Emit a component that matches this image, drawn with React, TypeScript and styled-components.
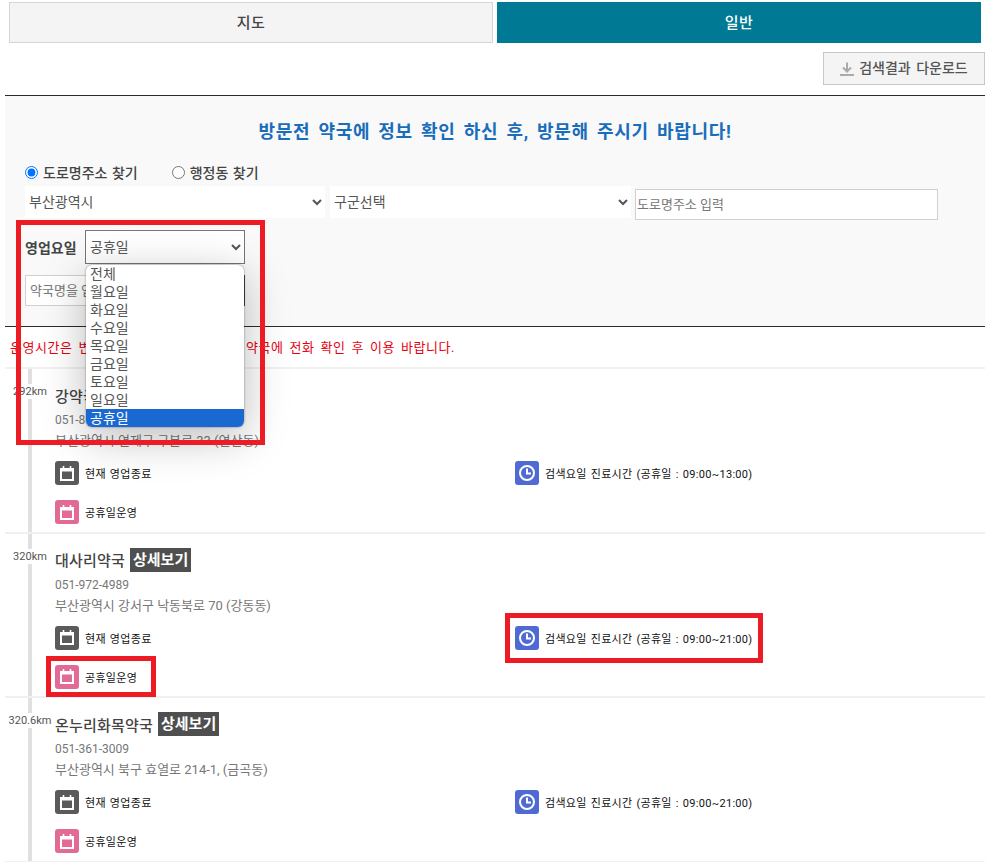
import React from "react";
import styled, { createGlobalStyle } from "styled-components";

const Global = createGlobalStyle`
  html, body { margin: 0; padding: 0; background: #fff; }
  body { font-family: Roboto, "Noto Sans CJK KR", "Noto Sans", sans-serif; color: #333; }
  * { box-sizing: border-box; }
`;

const Page = styled.div`
  position: relative;
  width: 994px;
  height: 862px;
  overflow: hidden;
  padding: 2px 9px 0 5px;
`;

const Tabs = styled.div`
  display: flex;
  gap: 4px;
  margin: 0 4px;
`;

const Tab = styled.div<{ $active?: boolean }>`
  width: 484px;
  height: 41px;
  display: flex;
  align-items: center;
  justify-content: center;
  padding-bottom: 2px;
  font-size: 15px;
  font-weight: 500;
  letter-spacing: 0.5px;
  background: ${(p) => (p.$active ? "#007a94" : "#f4f4f4")};
  color: ${(p) => (p.$active ? "#fff" : "#444")};
  border: ${(p) => (p.$active ? "none" : "1px solid #d5d5d5")};
`;

const DownloadBar = styled.div`
  display: flex;
  justify-content: flex-end;
  margin-top: 9px;
  height: 33px;
`;

const DownloadButton = styled.div`
  width: 162px;
  height: 33px;
  display: flex;
  align-items: center;
  justify-content: center;
  gap: 5px;
  padding-bottom: 3px;
  background: #f4f4f4;
  border: 1px solid #c8c8c8;
  font-size: 14px;
  font-weight: 500;
  word-spacing: 2px;
  color: #555;
`;

const DownloadGlyph = styled.svg`
  margin-top: 3px;
`;

const SearchPanel = styled.div`
  margin-top: 10px;
  height: 232px;
  background: #f9f9f9;
  border-top: 1px solid #2b2b2b;
  border-bottom: 1px solid #2b2b2b;
  padding: 0 20px;
`;

const Title = styled.h2`
  margin: 25px 0 0;
  height: 22px;
  line-height: 22px;
  font-size: 18px;
  font-weight: 700;
  letter-spacing: 0.7px;
  word-spacing: 3px;
  text-align: center;
  color: #1a6dbb;
`;

const RadioRow = styled.div`
  display: flex;
  gap: 34px;
  margin-top: 21px;
  height: 16px;
  align-items: center;
`;

const RadioLabel = styled.label`
  display: flex;
  align-items: center;
  gap: 5px;
  font-size: 14px;
  font-weight: 500;
  word-spacing: 1px;
  color: #444;
`;

const RadioDot = styled.input`
  margin: 0;
  width: 13px;
  height: 13px;
`;

const AddressRow = styled.div`
  display: flex;
  gap: 5px;
  margin-top: 6px;
  align-items: flex-start;
`;

const PlainSelect = styled.select<{ $w: number }>`
  width: ${(p) => p.$w}px;
  height: 32px;
  border: none;
  background: #fff;
  padding: 0;
  font-family: inherit;
  font-size: 14px;
  color: #555;
`;

const AddressInput = styled.input`
  width: 303px;
  height: 31px;
  margin: 3px 0 0 -1px;
  border: 1px solid #d0d0d0;
  background: #fff;
  padding: 0 1px;
  font-family: inherit;
  font-size: 13px;
  &::placeholder { color: #777; }
`;

const DayRow = styled.div`
  display: flex;
  align-items: center;
  gap: 9px;
  margin-top: 10px;
`;

const DayLabel = styled.label`
  width: 51px;
  white-space: nowrap;
  font-size: 14px;
  font-weight: 700;
  color: #444;
`;

const DaySelect = styled.select`
  width: 160px;
  height: 34px;
  border: 1px solid #767676;
  background: #fff;
  padding: 0;
  font-family: inherit;
  font-size: 14px;
  color: #555;
`;

const NameRow = styled.div`
  display: flex;
  margin-top: 11px;
  width: 220px;
`;

const NameInput = styled.input`
  flex: 1;
  min-width: 0;
  height: 31px;
  border: 1px solid #d0d0d0;
  background: #fff;
  padding: 0 4px;
  font-family: inherit;
  font-size: 13px;
  &::placeholder { color: #777; }
`;

const NameButton = styled.div`
  width: 60px;
  height: 31px;
  background: #444;
`;

const Notice = styled.p`
  margin: 0;
  height: 42px;
  display: flex;
  align-items: center;
  padding: 0 0 2px 5px;
  font-size: 13px;
  letter-spacing: 0.55px;
  word-spacing: 2.2px;
  color: #e60012;
  border-bottom: 2px solid #f0f0f0;
`;

const List = styled.div`
  position: relative;
  &::before {
    content: "";
    position: absolute;
    left: 23px;
    top: 0;
    bottom: 0;
    width: 4px;
    background: #e0e0e0;
  }
`;

const Row = styled.article`
  position: relative;
  display: flex;
  height: 164.5px;
  border-bottom: 2px solid #f0f0f0;
`;

const Distance = styled.div`
  width: 50px;
  flex: none;
  margin-top: 15px;
  align-self: flex-start;
  display: flex;
  justify-content: center;
`;

const DistanceText = styled.span`
  background: #fff;
  font-size: 11px;
  line-height: 15px;
  height: 15px;
  color: #555;
`;

const Body = styled.div`
  flex: 1;
  padding-top: 14px;
`;

const NameLine = styled.div`
  display: flex;
  align-items: center;
  gap: 5px;
  height: 24px;
`;

const Name = styled.strong`
  font-size: 15px;
  font-weight: 500;
  letter-spacing: 0.2px;
  color: #444;
`;

const Detail = styled.span`
  padding: 0 3px;
  height: 24px;
  line-height: 24px;
  background: #4f4f4f;
  color: #fff;
  font-size: 15px;
  font-weight: 700;
`;

const Phone = styled.div`
  margin-top: 3px;
  font-size: 12px;
  line-height: 21px;
  color: #777;
`;

const Address = styled.div`
  margin-top: -1px;
  font-size: 13px;
  line-height: 21px;
  color: #777;
`;

const StatusGrid = styled.div`
  display: grid;
  grid-template-columns: 460px 1fr;
  row-gap: 15px;
  margin-top: 10px;
`;

const Status = styled.div`
  display: flex;
  align-items: center;
  gap: 6px;
  height: 24px;
  font-size: 11px;
  letter-spacing: 0.3px;
  word-spacing: 1px;
  color: #111;
`;

const IconBox = styled.span<{ $bg: string }>`
  width: 24px;
  height: 24px;
  flex: none;
  border-radius: 3px;
  background: ${(p) => p.$bg};
  display: flex;
  align-items: center;
  justify-content: center;
`;

const Dropdown = styled.ul`
  position: absolute;
  left: 86px;
  top: 265px;
  width: 158px;
  height: 162px;
  margin: 0;
  padding: 0;
  list-style: none;
  background: #fff;
  border-radius: 6px;
  overflow: hidden;
  box-shadow: 0 0 2px rgba(0,0,0,.5), 0 10px 44px rgba(0,0,0,.27);
`;

const Option = styled.li<{ $sel?: boolean }>`
  height: 18px;
  line-height: 18px;
  padding-left: 4px;
  font-size: 14px;
  background: ${(p) => (p.$sel ? "#1a69d2" : "transparent")};
  color: ${(p) => (p.$sel ? "#fff" : "#555")};
`;

const Highlight = styled.div<{ $x: number; $y: number; $w: number; $h: number }>`
  position: absolute;
  left: ${(p) => p.$x}px;
  top: ${(p) => p.$y}px;
  width: ${(p) => p.$w}px;
  height: ${(p) => p.$h}px;
  border: 5px solid #ed1c24;
`;

const Calendar = () => (
  <svg width="14" height="15" viewBox="0 0 14 15" fill="none" stroke="#fff" strokeWidth="2">
    <rect x="1" y="3" width="12" height="11" />
    <path d="M1 4.5h12" />
    <path d="M3.5 0v3M10.5 0v3" strokeWidth="1.6" />
  </svg>
);

const Clock = () => (
  <svg width="16" height="16" viewBox="0 0 16 16" fill="none" stroke="#fff" strokeWidth="2">
    <circle cx="8" cy="8" r="7" />
    <path d="M8 3.5V8.5H12" />
  </svg>
);

const DownloadIcon = () => (
  <DownloadGlyph width="14" height="14" viewBox="0 0 14 14" fill="none" stroke="#aaa" strokeWidth="2">
    <path d="M7 0.5V9M3 5.5L7 9.5L11 5.5" />
    <path d="M0 13h14" />
  </DownloadGlyph>
);

type Pharmacy = { km: string; name: string; phone: string; addr: string; hours: string };

const items: Pharmacy[] = [
  { km: "292km", name: "강약국", phone: "051-868-1234", addr: "부산광역시 연제구 구본로 33 (연산동)", hours: "09:00~13:00" },
  { km: "320km", name: "대사리약국", phone: "051-972-4989", addr: "부산광역시 강서구 낙동북로 70 (강동동)", hours: "09:00~21:00" },
  { km: "320.6km", name: "온누리화목약국", phone: "051-361-3009", addr: "부산광역시 북구 효열로 214-1, (금곡동)", hours: "09:00~21:00" },
];

const days = ["전체", "월요일", "화요일", "수요일", "목요일", "금요일", "토요일", "일요일", "공휴일"];

export default function App() {
  return (
    <Page>
      <Global />
      <Tabs>
        <Tab>지도</Tab>
        <Tab $active>일반</Tab>
      </Tabs>
      <DownloadBar>
        <DownloadButton><DownloadIcon />검색결과 다운로드</DownloadButton>
      </DownloadBar>
      <SearchPanel>
        <Title>방문전 약국에 정보 확인 하신 후, 방문해 주시기 바랍니다!</Title>
        <RadioRow>
          <RadioLabel><RadioDot type="radio" name="m" defaultChecked />도로명주소 찾기</RadioLabel>
          <RadioLabel><RadioDot type="radio" name="m" />행정동 찾기</RadioLabel>
        </RadioRow>
        <AddressRow>
          <PlainSelect $w={300} defaultValue="부산광역시"><option>부산광역시</option></PlainSelect>
          <PlainSelect $w={301} defaultValue="구군선택"><option>구군선택</option></PlainSelect>
          <AddressInput placeholder="도로명주소 입력" />
        </AddressRow>
        <DayRow>
          <DayLabel>영업요일</DayLabel>
          <DaySelect defaultValue="공휴일">{days.map((d) => <option key={d}>{d}</option>)}</DaySelect>
        </DayRow>
        <NameRow>
          <NameInput placeholder="약국명을 입력하세요" />
          <NameButton />
        </NameRow>
      </SearchPanel>
      <Notice>운영시간은 변경될 수 있으므로 방문 전 약국에 전화 확인 후 이용 바랍니다.</Notice>
      <List>
        {items.map((it) => (
          <Row key={it.km}>
            <Distance><DistanceText>{it.km}</DistanceText></Distance>
            <Body>
              <NameLine><Name>{it.name}</Name><Detail>상세보기</Detail></NameLine>
              <Phone>{it.phone}</Phone>
              <Address>{it.addr}</Address>
              <StatusGrid>
                <Status><IconBox $bg="#5a5a5a"><Calendar /></IconBox>현재 영업종료</Status>
                <Status><IconBox $bg="#4f6bd3"><Clock /></IconBox>검색요일 진료시간 (공휴일 : {it.hours})</Status>
                <Status><IconBox $bg="#e26a94"><Calendar /></IconBox>공휴일운영</Status>
              </StatusGrid>
            </Body>
          </Row>
        ))}
      </List>
      <Dropdown>
        {days.map((d) => <Option key={d} $sel={d === "공휴일"}>{d}</Option>)}
      </Dropdown>
      <Highlight $x={16} $y={220} $w={249} $h={225} />
      <Highlight $x={46} $y={656} $w={110} $h={41} />
      <Highlight $x={505} $y={613} $w={258} $h={50} />
    </Page>
  );
}
